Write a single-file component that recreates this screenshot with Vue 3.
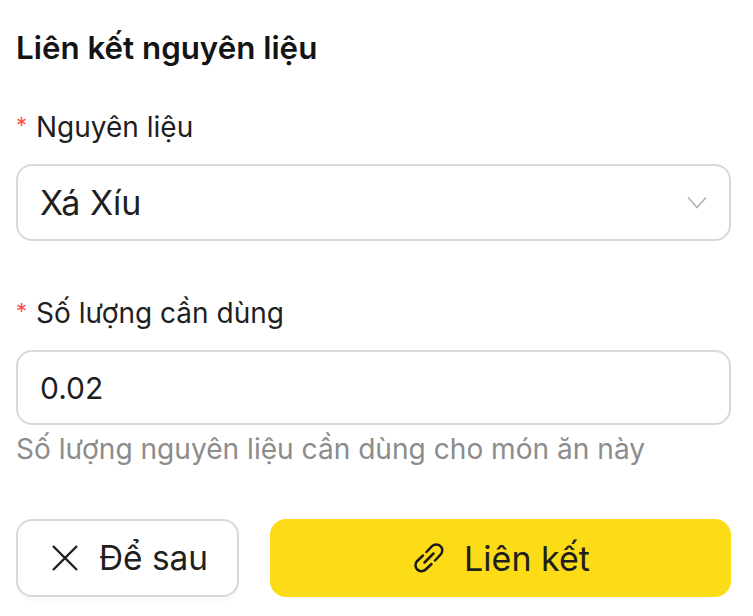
<template>
  <div class="panel">
    <h3 class="title">Liên kết nguyên liệu</h3>

    <div class="field field-select">
      <label class="label"><span class="req">*</span>Nguyên liệu</label>
      <div class="select">
        <span>Xá Xíu</span>
        <svg class="chevron" viewBox="0 0 20 12" fill="none">
          <path d="M1 1l9 10 9-10" stroke="#b5b5b5" stroke-width="1.8" />
        </svg>
      </div>
    </div>

    <div class="field">
      <label class="label"><span class="req">*</span>Số lượng cần dùng</label>
      <input class="input" type="text" value="0.02" />
      <p class="hint">Số lượng nguyên liệu cần dùng cho món ăn này</p>
    </div>

    <div class="actions">
      <button class="btn btn-later">
        <svg class="icon-x" viewBox="0 0 28 28" fill="none">
          <path d="M2 2l24 24M26 2L2 26" stroke="#1f1f1f" stroke-width="2.4" />
        </svg>
        Để sau
      </button>
      <button class="btn btn-link">
        <svg class="icon-link" viewBox="0 0 30 30" fill="none" stroke="#1a1a1a" stroke-width="2.5" stroke-linecap="round">
          <path d="M12.5 9L18 3.2A6 6 0 0 1 26.5 11.7L21 17.5" />
          <path d="M9 12.5L3.2 18A6 6 0 0 0 11.7 26.5L17.5 21" />
          <path d="M10.5 19.5L19.5 10.5" />
        </svg>
        Liên kết
      </button>
    </div>
  </div>
</template>

<script setup>
</script>

<style>
html,
body {
  background: #fff;
}
</style>

<style scoped>
.panel {
  width: 753px;
  height: 616px;
  box-sizing: border-box;
  padding: 29px 22px 0 16px;
  font-family: Inter, "Noto Sans", sans-serif;
  color: #1f1f1f;
  overflow: hidden;
}

.title {
  margin: 0 0 40px;
  font-size: 31.3px;
  line-height: 38px;
  font-weight: 600;
  color: #141414;
}

.field-select {
  margin-bottom: 52px;
}

.label {
  display: block;
  height: 40px;
  margin-bottom: 17px;
  font-size: 28px;
  line-height: 40px;
}

.req {
  display: inline-block;
  width: 20px;
  color: #ff4d4f;
  font-size: 22px;
  line-height: 1;
  vertical-align: 4px;
}

.select {
  display: flex;
  align-items: center;
  justify-content: space-between;
  box-sizing: border-box;
  height: 77px;
  padding: 0 22px;
  border: 2px solid #d9d9d9;
  border-radius: 16px;
  font-size: 34px;
}

.chevron {
  width: 20px;
  height: 13px;
}

.input {
  display: block;
  box-sizing: border-box;
  width: 100%;
  height: 75px;
  padding: 0 22px;
  border: 2px solid #d9d9d9;
  border-radius: 16px;
  font: inherit;
  font-size: 30px;
  color: #1f1f1f;
  outline: none;
}

.hint {
  margin: 4px 0 0;
  font-size: 28.1px;
  line-height: 40px;
  color: #8c8c8c;
}

.actions {
  display: flex;
  gap: 31px;
  margin-top: 50px;
}

.btn {
  display: flex;
  align-items: center;
  justify-content: center;
  box-sizing: border-box;
  height: 78px;
  border-radius: 16px;
  font-family: inherit;
  font-size: 33.4px;
  color: #1f1f1f;
}

.btn-later {
  flex: 0 0 223px;
  gap: 20px;
  padding: 0 0 0 4px;
  border: 2px solid #d9d9d9;
  background: #fff;
  box-shadow: 0 4px 0 rgba(0, 0, 0, 0.02);
}

.btn-link {
  flex: 1;
  gap: 20px;
  padding: 0 0 0 3px;
  border: none;
  background: #fcdb17;
  font-size: 34px;
}

.icon-x {
  width: 28px;
  height: 28px;
}

.icon-link {
  width: 30px;
  height: 30px;
}
</style>
